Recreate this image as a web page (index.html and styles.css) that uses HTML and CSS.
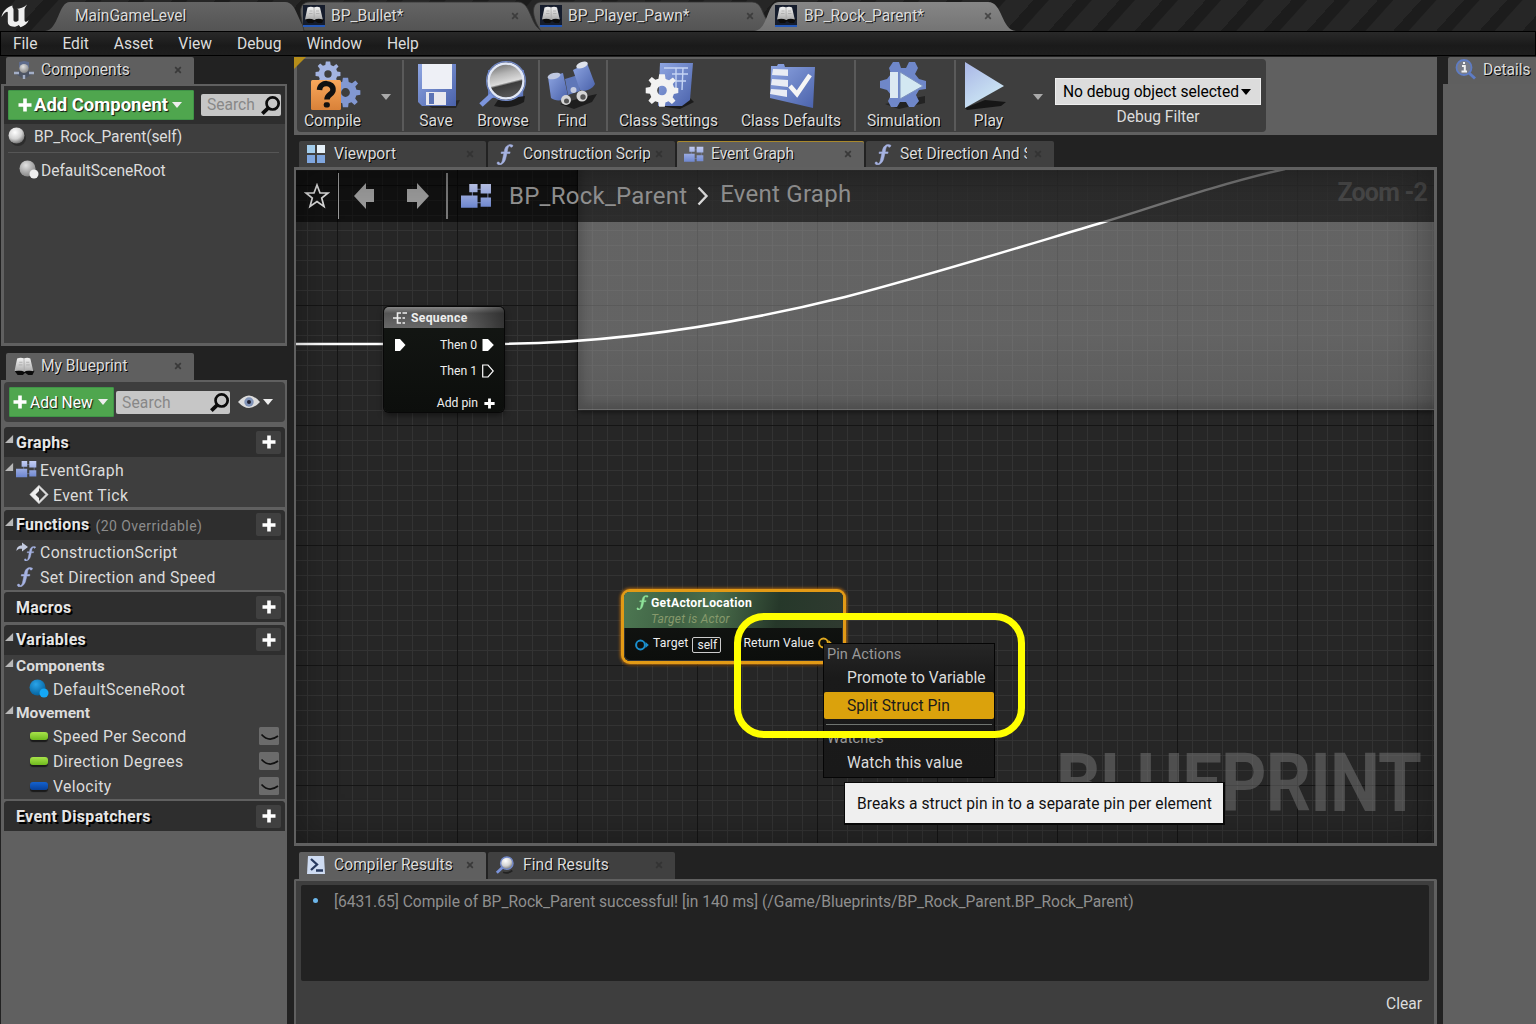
FILE: index.html
```html
<!DOCTYPE html>
<html lang="en">
<head>
<meta charset="utf-8">
<title>BP_Rock_Parent</title>
<link rel="stylesheet" href="styles.css">
</head>
<body>
<svg class="defs" width="0" height="0" aria-hidden="true">
  <defs>
    <linearGradient id="blue" x1="0" y1="0" x2="0" y2="1"><stop offset="0" stop-color="#c3cdf3"/><stop offset="1" stop-color="#6d86cf"/></linearGradient>
    <linearGradient id="deep" x1="0" y1="0" x2="1" y2="1"><stop offset="0" stop-color="#8fa6e2"/><stop offset="1" stop-color="#4a62ab"/></linearGradient>
    <linearGradient id="play" x1="0" y1="0" x2="0.6" y2="1"><stop offset="0" stop-color="#a9b6e6"/><stop offset="1" stop-color="#cfeaf5"/></linearGradient>
    <linearGradient id="orange" x1="0" y1="0" x2="0" y2="1"><stop offset="0" stop-color="#f9a85c"/><stop offset="1" stop-color="#d98138"/></linearGradient>
    <linearGradient id="paper" x1="0" y1="0" x2="0" y2="1"><stop offset="0" stop-color="#f4f4f4"/><stop offset="1" stop-color="#a9a9a9"/></linearGradient>
    <linearGradient id="tabg" x1="0" y1="0" x2="0" y2="1"><stop offset="0" stop-color="#646464"/><stop offset="1" stop-color="#545454"/></linearGradient>
    <linearGradient id="tabon" x1="0" y1="0" x2="0" y2="1"><stop offset="0" stop-color="#868686"/><stop offset="1" stop-color="#747474"/></linearGradient>
    <radialGradient id="ball" cx=".4" cy=".3" r=".7"><stop offset="0" stop-color="#fff"/><stop offset=".6" stop-color="#d2d2d2"/><stop offset="1" stop-color="#777"/></radialGradient>
    <radialGradient id="greyball" cx=".4" cy=".3" r=".7"><stop offset="0" stop-color="#e2e2e2"/><stop offset="1" stop-color="#888"/></radialGradient>
    <radialGradient id="blueball" cx=".4" cy=".3" r=".7"><stop offset="0" stop-color="#2aa4e8"/><stop offset="1" stop-color="#05639f"/></radialGradient>
    <linearGradient id="glass" x1="0.3" y1="0" x2="0.55" y2="1"><stop offset="0" stop-color="#707070"/><stop offset=".3" stop-color="#b4b4b4"/><stop offset=".56" stop-color="#dcdcdc"/><stop offset=".62" stop-color="#3c3c3c"/><stop offset="1" stop-color="#5a5a5a"/></linearGradient>
  </defs>
  <symbol id="gear" viewBox="-12 -12 24 24">
    <path fill-rule="evenodd" d="M-2 -11.500H2L2.500 -8.200L5 -7.200L7.700 -9.200L9.700 -7L7.600 -4.600L8.500 -2.200L11.500 -1.800V1.800L8.400 2.400L7.500 4.700L9.500 7.300L7 9.600L4.600 7.600L2.400 8.400L2 11.500H-2L-2.500 8.300L-4.800 7.500L-7.200 9.500L-9.600 7.200L-7.600 4.600L-8.500 2.300L-11.500 1.900V-1.900L-8.400 -2.400L-7.500 -4.700L-9.500 -7.300L-7.200 -9.600L-4.700 -7.600L-2.500 -8.300ZM0 -3.400A3.400 3.400 0 1 0 0 3.400A3.400 3.400 0 1 0 0 -3.400Z"/>
  </symbol>
  <symbol id="graph" viewBox="0 0 30 24">
    <path d="M11 7V17M11 5H26V18H14" fill="none" stroke="#7480a8" stroke-width="1"/>
    <path fill="url(#blue)" d="M8 0H16V8H8ZM19 0H29V9H19ZM0 11H16V23H0ZM19 13H29V22H19Z"/>
  </symbol>
  <symbol id="fn" viewBox="0 0 16 20">
    <path d="M15.500 1.200C12 -0.500 8.500 1.500 7.600 5.500L7.200 7.500H4.500L4.200 9H6.900L5.500 15.500C5 18 4 19 2.800 18.400C2.800 16.800 0.500 16.600 0.400 18.200C0.600 20.200 3.500 20.300 5.300 19C7.500 17.500 8.400 15.500 9 12.500L9.800 9H12.600L12.900 7.500H10.100L10.600 4.800C11 2.600 12 1.700 13 1.900C13 3.600 15.300 3.600 15.500 1.200Z" fill="currentColor" stroke="currentColor" stroke-width=".5"/>
  </symbol>
  <symbol id="book" viewBox="0 0 20 18">
    <path d="M1 13L4 17H9L11 15L14 17H18L20 13Z" fill="#0c0c0c"/>
    <path d="M3.500 1.500Q7 0 10 1.500Q13 0 16 1.500L18.800 13.500Q14 12 10.300 14Q6 12 1 13.500Z" fill="url(#paper)"/>
    <path d="M10 2L10.300 14M5.500 5H8.500M5 7.500H8.500M12 5H15M12 7.500H15.500" stroke="#aaa" stroke-width=".8" fill="none"/>
  </symbol>
  <symbol id="find" viewBox="0 0 18 18">
    <circle cx="10.800" cy="7.200" r="5.200" fill="none" stroke="#0b0b0b" stroke-width="2.300"/><path d="M7.200 11L2 16" stroke="#0b0b0b" stroke-width="3.200"/>
  </symbol>
  <symbol id="plus" viewBox="0 0 14 14"><path d="M5.200 0.500H8.800V5.200H13.500V8.800H8.800V13.500H5.200V8.800H0.500V5.200H5.200Z" fill="#fff"/></symbol>
  <symbol id="x" viewBox="0 0 8 8"><path d="M1.200 1.200L6.800 6.800M6.800 1.200L1.200 6.800" stroke="#303030" stroke-width="1.700"/></symbol>
  <symbol id="lens" viewBox="0 0 22 20"><path d="M9 12L2 18.500" stroke="#7b93da" stroke-width="3"/><path d="M9 18Q14 20 19 16" stroke="#222" stroke-width="2" fill="none"/><circle cx="13" cy="8" r="6.800" fill="url(#ball)" stroke="#7389c8" stroke-width="1.600"/></symbol>
  <symbol id="tri" viewBox="0 0 10 10"><path d="M0 9H9V0Z" fill="#b8b8b8"/></symbol>
  <symbol id="lid" viewBox="0 0 20 18"><rect width="20" height="18" rx="1.500" fill="#6b6b6b"/><path d="M2.500 7.500C7 12.500 13 13.500 19 9" fill="none" stroke="#111" stroke-width="1.700"/></symbol>
</svg>

<header class="titlebar">
  <svg class="logo" width="32" height="31" viewBox="0 0 32 31"><path d="M1.500 17C2.500 11.500 6.500 7.500 12.500 5.500C11.800 7.500 13.500 8 13.500 9.500V20C13.500 22 16.500 22.500 18.500 20.500V10.500C18.500 9.300 17.700 9 16.500 9C20 8.500 24 7.500 27 4.500C25.500 7 24.500 8 24.500 10V20C24.500 22.300 26.500 22.500 28.800 20C27.500 23.500 24.500 26 20.500 27.300L18.800 25C16.800 26.600 14.500 27 12.300 26.600C9.500 26.200 7.800 24.500 7.800 22V12.500C7.800 10.800 4.500 12 1.500 17Z" fill="#eee"/></svg>
  <div class="wtab wtab-level">
    <svg class="wshape" width="266" height="31"><path d="M0 31C14 30 13 2 25 2H240C254 2 252 29 266 31Z" fill="url(#tabg)"/></svg>
    <span>MainGameLevel</span>
  </div>
  <div class="wtab wtab-bullet">
    <svg class="wshape" width="250" height="31"><path d="M8 31V31C6 20 -1 2 14 2H222C236 2 234 29 248 31Z" fill="url(#tabg)" stroke="#333" stroke-width=".8"/></svg>
    <i class="asset"><svg width="20" height="18"><use href="#book"/></svg></i><span>BP_Bullet*</span><svg class="close" width="8" height="8"><use href="#x"/></svg>
  </div>
  <div class="wtab wtab-pawn">
    <svg class="wshape" width="240" height="31"><path d="M10 31C3 22 -3 2 11 2H221C231 2 231 14 236 20V31Z" fill="url(#tabg)" stroke="#333" stroke-width=".8"/></svg>
    <i class="asset"><svg width="20" height="18"><use href="#book"/></svg></i><span>BP_Player_Pawn*</span><svg class="close" width="8" height="8"><use href="#x"/></svg>
  </div>
  <div class="wtab wtab-rock">
    <svg class="wshape" width="275" height="31"><path d="M0 31C15 30 12 2 25 2H234C249 2 247 30 262 31Z" fill="url(#tabon)"/></svg>
    <i class="asset"><svg width="20" height="18"><use href="#book"/></svg></i><span>BP_Rock_Parent*</span><svg class="close" width="8" height="8"><use href="#x"/></svg>
  </div>
</header>

<nav class="menubar"><span>File</span><span>Edit</span><span>Asset</span><span>View</span><span>Debug</span><span>Window</span><span>Help</span></nav>

<main class="workspace">
  <aside class="left">
    <div class="ptab ptab-on side-tab">
      <svg width="22" height="20" viewBox="0 0 22 20"><path d="M1 13L11 9L21 13L11 19Z" fill="#4e5564"/><path d="M1 13H6M16 13H21M11 15V19" stroke="#a3aec6" stroke-width="2.400"/><path d="M6 2L11 1L16 2V8H6Z" fill="#5f6c8c"/><circle cx="11" cy="8.500" r="4.600" fill="url(#greyball)"/></svg>
      <span>Components</span><svg class="close" width="8" height="8"><use href="#x"/></svg>
    </div>
    <section class="components">
      <div class="comp-head">
        <button class="add add-component"><svg width="14" height="14"><use href="#plus"/></svg><span>Add Component</span><i class="caret"></i></button>
        <div class="search search-a"><span>Search</span><svg width="21" height="21"><use href="#find"/></svg></div>
      </div>
      <div class="comp-row comp-self"><svg width="18" height="19" viewBox="0 0 18 19"><circle cx="10" cy="11" r="8" fill="#222" opacity=".6"/><circle cx="8.500" cy="8.500" r="8" fill="url(#ball)"/></svg><span>BP_Rock_Parent(self)</span></div>
      <div class="comp-row comp-root"><svg width="20" height="20" viewBox="0 0 20 20"><circle cx="8.500" cy="8.500" r="8" fill="url(#greyball)"/><circle cx="15" cy="14" r="4.500" fill="#eee"/></svg><span>DefaultSceneRoot</span></div>
    </section>
    <div class="ptab ptab-on side-tab side-tab-bp">
      <svg width="20" height="19"><use href="#book"/></svg>
      <span>My Blueprint</span><svg class="close" width="8" height="8"><use href="#x"/></svg>
    </div>
    <section class="blueprint">
      <div class="bp-tools">
        <button class="add add-new"><svg width="14" height="14"><use href="#plus"/></svg><span>Add New</span><i class="caret"></i></button>
        <div class="search search-b"><span>Search</span><svg width="21" height="21"><use href="#find"/></svg></div>
        <svg class="eye" width="22" height="14" viewBox="0 0 22 14"><path d="M0 7Q11 -6 22 7Q11 19 0 7Z" fill="#ddd"/><circle cx="11" cy="7" r="4.700" fill="#8194b8"/><circle cx="11" cy="7" r="2" fill="#223"/></svg><i class="caret"></i>
      </div>
      <div class="group">
        <h3><svg class="tri" width="9" height="9"><use href="#tri"/></svg><span>Graphs</span><b class="plus"><svg width="14" height="14"><use href="#plus"/></svg></b></h3>
        <div class="row"><svg class="tri" width="9" height="9"><use href="#tri"/></svg><svg width="21" height="17" viewBox="0 0 30 24" class="ico1"><use href="#graph"/></svg><span>EventGraph</span></div>
        <div class="row in"><svg width="20" height="19" viewBox="0 0 20 19"><path d="M10 1.500L18 9.500L10 17.500L2 9.500Z" fill="none" stroke="#d8d8d8" stroke-width="2.200"/><path d="M10 1L1.500 9.500L10 18V13L6.500 9.500L10 6Z" fill="#eee"/></svg><span>Event Tick</span></div>
      </div>
      <div class="group">
        <h3><svg class="tri" width="9" height="9"><use href="#tri"/></svg><span>Functions</span><small>(20 Overridable)</small><b class="plus"><svg width="14" height="14"><use href="#plus"/></svg></b></h3>
        <div class="row"><svg class="ico1 fnc" width="21" height="20" viewBox="0 0 21 20"><path d="M0.500 9C0.500 5 3 3.500 6 3.500V0.500L12 5L6 9.500V6.800C4 6.500 2 6.500 0.500 9Z" fill="#c3cadf"/><use href="#fn" x="8" y="4" width="12" height="15"/></svg><span>ConstructionScript</span></div>
        <div class="row"><svg class="ico1 fnc fn-row" width="18" height="20"><use href="#fn"/></svg><span>Set Direction and Speed</span></div>
      </div>
      <div class="group"><h3><span>Macros</span><b class="plus"><svg width="14" height="14"><use href="#plus"/></svg></b></h3></div>
      <div class="group vars">
        <h3><svg class="tri" width="9" height="9"><use href="#tri"/></svg><span>Variables</span><b class="plus"><svg width="14" height="14"><use href="#plus"/></svg></b></h3>
        <h4><svg class="tri" width="9" height="9"><use href="#tri"/></svg>Components</h4>
        <div class="row in"><svg width="20" height="20" viewBox="0 0 20 20"><circle cx="8.500" cy="8.500" r="8" fill="url(#blueball)"/><circle cx="15" cy="14" r="4.500" fill="#14a7f5"/></svg><span>DefaultSceneRoot</span></div>
        <h4><svg class="tri" width="9" height="9"><use href="#tri"/></svg>Movement</h4>
        <div class="row in"><i class="pill"></i><span>Speed Per Second</span><svg class="lid" width="20" height="18"><use href="#lid"/></svg></div>
        <div class="row in"><i class="pill"></i><span>Direction Degrees</span><svg class="lid" width="20" height="18"><use href="#lid"/></svg></div>
        <div class="row in"><i class="pill pill-vec"></i><span>Velocity</span><svg class="lid" width="20" height="18"><use href="#lid"/></svg></div>
      </div>
      <div class="group"><h3><span>Event Dispatchers</span><b class="plus"><svg width="14" height="14"><use href="#plus"/></svg></b></h3></div>
    </section>
  </aside>

  <div class="center">
    <div class="toolbar">
      <i class="corner"></i>
      <div class="tools">
        <div class="tool t-compile">
          <svg width="54" height="50" viewBox="0 0 54 50"><use href="#gear" x="8" y="1" width="26" height="26" fill="#a3b4e2"/><use href="#gear" x="23" y="17" width="31" height="31" fill="#8298d2"/><rect x="4" y="20" width="30" height="30" rx="1.500" fill="url(#orange)"/><path d="M12.500 30C13 21 26.500 22 26 30C26 34.500 20 34 20 39.500" fill="none" stroke="#111" stroke-width="5.500"/><rect x="16.800" y="42.300" width="6" height="5.200" rx="2" fill="#111"/></svg>
          <span>Compile</span>
        </div>
        <i class="caret dim c-compile"></i>
        <div class="tool t-save">
          <svg width="46" height="50" viewBox="0 0 46 50"><path d="M10 44L44 40L40 48H16Z" fill="#171717" opacity=".6"/><path d="M2 4H40V46H6L2 42Z" fill="url(#deep)"/><rect x="6" y="4" width="30" height="25" fill="#eef0f6"/><rect x="10" y="32" width="20" height="13" fill="#e8e8ee"/><rect x="13" y="33" width="5" height="11" fill="#5b73b5"/></svg>
          <span>Save</span>
        </div>
        <div class="tool t-browse">
          <svg width="52" height="50" viewBox="0 0 52 50"><path d="M12 10H48L47 38H12Z" fill="#6078bd"/><path d="M18 46Q34 50 48 42L49 36L22 40Z" fill="#1b1b1b"/><path d="M18 33L5 45" stroke="#7c95dd" stroke-width="5"/><circle cx="30" cy="21" r="17.500" fill="url(#glass)" stroke="#e2e8f6" stroke-width="2.500"/><circle cx="30" cy="21" r="19.400" fill="none" stroke="#7188c6" stroke-width="1.200"/></svg>
          <span>Browse</span>
        </div>
        <div class="tool t-find">
          <svg width="52" height="50" viewBox="0 0 52 50"><path d="M14 44L42 36L51 34L46 42L28 49Z" fill="#1d1d1d"/><path d="M19 19L32 15L34 31L22 35Z" fill="#5f77b8"/><path d="M2 17L17 13L22 36C17 42 9 41 5 38Z" fill="url(#deep)"/><path d="M27 10L41 3L49 24C46 30 38 32 34 30Z" fill="url(#deep)"/><ellipse cx="8" cy="16" rx="6.500" ry="3" transform="rotate(-14 8 16)" fill="#bfc8e0"/><ellipse cx="36" cy="5" rx="6" ry="3" transform="rotate(-22 36 5)" fill="#dfe3ec"/><circle cx="20" cy="40" r="5" fill="#d5d5d5"/><circle cx="20.500" cy="41" r="2.500" fill="#555"/><circle cx="36" cy="36" r="5.500" fill="#d5d5d5"/><circle cx="37" cy="37" r="2.700" fill="#555"/><circle cx="27.500" cy="30" r="3" fill="#c4cbe0"/></svg>
          <span>Find</span>
        </div>
        <div class="tool t-settings">
          <svg width="50" height="50" viewBox="0 0 50 50"><path d="M14 46L46 38L50 42L36 49Z" fill="#1b1b1b"/><path d="M16 3H49L46 40L38 46H14Z" fill="url(#deep)"/><path d="M20 8H44M28 14H44M28 21H42M32 8V30M39 8L38 30" stroke="#c5d4f4" stroke-width="1.400"/><use href="#gear" x="1" y="13" width="34" height="35" fill="#f2f2f2"/></svg>
          <span>Class Settings</span>
        </div>
        <div class="tool t-defaults">
          <svg width="50" height="50" viewBox="0 0 50 50"><path d="M12 4H18L19 7H49L47 48L4 38L5 6H11Z" fill="url(#deep)"/><path d="M7 9L22 9.500V16L6 15ZM6 19L22 20V27L5 25ZM5 29L21 30V37L4 34Z" fill="#e9ecf4"/><path d="M24 26L31 34L44 15" fill="none" stroke="#f5f5f5" stroke-width="4.500"/></svg>
          <span>Class Defaults</span>
        </div>
        <div class="tool t-sim">
          <svg width="50" height="50" viewBox="0 0 50 50"><path d="M6 44L46 36V43L20 49Z" fill="#1d1d1d" opacity=".8"/><path d="M14 2H20L22 8H27L30 2H36L39 8L36 14L40 19L47 21V29L40 30L37 35L40 41L35 47H30L27 42H21L18 47H12L9 41L12 35L8 30L1 28V21L8 19L12 14L10 8Z" fill="#6f87c9"/><path d="M11 12H19V38H11Z" fill="#dce9f2"/><path d="M21 12L44 26L21 39Z" fill="#d3e8f2" stroke="#7d92bd"/></svg>
          <span>Simulation</span>
        </div>
        <div class="tool t-play">
          <svg width="44" height="50" viewBox="0 0 44 50"><path d="M2 48L22 40L43 42L38 46L4 50Z" fill="#161616"/><path d="M2 2L41 26L2 48Z" fill="url(#play)"/></svg>
          <span>Play</span>
        </div>
        <i class="caret dim c-play"></i>
        <div class="debug"><div class="select"><span>No debug object selected</span><i class="caret dark"></i></div><span>Debug Filter</span></div>
      </div>
    </div>

    <div class="tabs">
      <div class="ptab"><svg width="20" height="20" viewBox="0 0 20 20"><path d="M1 1H9V9H1ZM11 11H19V19H11ZM1 11H9V19H1Z" fill="#7fa6df"/><path d="M1 1H9V9H1Z" fill="#a3cdec"/><path d="M11 1H19V9H11Z" fill="#e5f0f8"/></svg><span>Viewport</span><svg class="close" width="8" height="8"><use href="#x"/></svg></div>
      <div class="ptab"><svg class="fnc" width="20" height="21"><use href="#fn"/></svg><span class="clip">Construction Script</span><svg class="close" width="8" height="8"><use href="#x"/></svg></div>
      <div class="ptab ptab-on gold"><svg width="20" height="17" viewBox="0 0 30 24"><use href="#graph"/></svg><span>Event Graph</span><svg class="close" width="8" height="8"><use href="#x"/></svg></div>
      <div class="ptab"><svg class="fnc" width="20" height="21"><use href="#fn"/></svg><span class="clip">Set Direction And Speed</span><svg class="close" width="8" height="8"><use href="#x"/></svg></div>
    </div>

    <div class="graph">
      <div class="comment"></div>
      <svg class="wires" width="1138" height="673" viewBox="296 170 1138 673"><path d="M296 344H396M490 344C620 344 740 323 845 297C930 275 1020 247 1104 222C1165 203 1220 184 1285 169" fill="none" stroke="#fff" stroke-width="2.500"/></svg>
      <div class="mark">BLUEPRINT</div>

      <div class="node sequence">
        <header><svg width="14" height="12" viewBox="0 0 14 12"><path d="M0 6H5M8 1H4.500V11H8M4.500 6H8M9.500 1H14M9.500 6H12M9.500 11H12" stroke="#eee" stroke-width="1.600" fill="none"/></svg>Sequence</header>
        <div class="pins"><svg width="12" height="14" viewBox="0 0 12 14"><path d="M1 1H6L11.500 7L6 13H1Z" fill="#fff"/></svg><span>Then 0</span><svg width="12" height="14" viewBox="0 0 12 14"><path d="M0.500 1H6L11.800 7L6 13H0.500Z" fill="#fff"/></svg></div>
        <div class="pins"><span>Then 1</span><svg width="12" height="14" viewBox="0 0 12 14"><path d="M0.700 1H6L11.300 7L6 13H0.700Z" fill="none" stroke="#fff" stroke-width="1.200"/></svg></div>
        <div class="pins addpin"><span>Add pin</span><svg width="11" height="11" viewBox="0 0 14 14"><use href="#plus" width="14" height="14"/></svg></div>
      </div>

      <div class="node actor">
        <header><svg width="13" height="15"><use href="#fn"/></svg><div>GetActorLocation<em>Target is Actor</em></div></header>
        <div class="io">
          <svg width="14" height="12" viewBox="0 0 14 12"><circle cx="5.500" cy="6" r="4.400" fill="none" stroke="#1b8fce" stroke-width="2"/><path d="M10.500 3L13.800 6L10.500 9Z" fill="#1b8fce"/></svg>
          <span>Target</span><b>self</b><span class="ret">Return Value</span>
          <svg class="retpin" width="14" height="12" viewBox="0 0 14 12"><circle cx="5.500" cy="6" r="4.400" fill="none" stroke="#e0a920" stroke-width="2"/><path d="M10.500 3L13.800 6L10.500 9Z" fill="#e0a920"/></svg>
        </div>
      </div>

      <div class="crumbs">
        <svg width="26" height="26" viewBox="0 0 26 26"><path d="M13 2L16 10H24L17.700 15L20 23.500L13 18.500L6 23.500L8.300 15L2 10H10Z" fill="none" stroke="#ddd" stroke-width="1.700"/></svg>
        <i class="bar b1"></i>
        <svg class="back" width="22" height="28" viewBox="0 0 22 28"><path d="M0 14L12 1V7H20V20H12V27Z" fill="#999"/></svg>
        <svg class="fwd" width="22" height="28" viewBox="0 0 22 28"><path d="M22 14L10 1V7H0V20H10V27Z" fill="#999"/></svg>
        <i class="bar b2"></i>
        <svg class="gico" width="31" height="25" viewBox="0 0 30 24"><use href="#graph"/></svg>
        <span class="c1">BP_Rock_Parent</span>
        <svg class="chev" width="12" height="20" viewBox="0 0 12 20"><path d="M1.500 1.500L9.500 10L1.500 18.500" fill="none" stroke="#ddd" stroke-width="2.400"/></svg>
        <span class="c2">Event Graph</span>
        <span class="zoom">Zoom -2</span>
      </div>

      <div class="context">
        <h5>Pin Actions</h5>
        <div class="item">Promote to Variable</div>
        <div class="item on">Split Struct Pin</div>
        <hr>
        <h5 class="watch">Watches</h5>
        <div class="item last">Watch this value</div>
      </div>
      <div class="highlight"></div>
      <div class="tooltip">Breaks a struct pin in to a separate pin per element</div>
    </div>

    <div class="tabs results-tabs">
      <div class="ptab ptab-on"><svg width="20" height="20" viewBox="0 0 20 20"><path d="M2 1H18L19 19H1Z" fill="#cfdcf2"/><path d="M5 4L11 9.500L5 15M10 15.500H17" stroke="#27395e" stroke-width="2.300" fill="none"/></svg><span>Compiler Results</span><svg class="close" width="8" height="8"><use href="#x"/></svg></div>
      <div class="ptab"><svg width="20" height="20"><use href="#lens"/></svg><span>Find Results</span><svg class="close" width="8" height="8"><use href="#x"/></svg></div>
    </div>
    <div class="results">
      <div class="log"><i></i><span>[6431.65] Compile of BP_Rock_Parent successful! [in 140 ms] (/Game/Blueprints/BP_Rock_Parent.BP_Rock_Parent)</span></div>
      <div class="clear">Clear</div>
    </div>
  </div>

  <aside class="right">
    <div class="ptab ptab-on det"><svg width="22" height="21" viewBox="0 0 22 21"><path d="M14 14L20 19.500" stroke="#5e7cc4" stroke-width="3"/><circle cx="9" cy="8.500" r="7.500" fill="#777b88" stroke="#5e7cc4" stroke-width="1.800"/><path d="M7 7H9.800V12M6.500 12.500H12M9 3V5" stroke="#f0f0f0" stroke-width="2" fill="none"/></svg><span>Details</span></div>
    <div class="details"></div>
  </aside>
</main>
</body>
</html>
```
FILE: styles.css
```css
* { box-sizing: border-box; }
body { margin: 0; width: 1536px; height: 1024px; overflow: hidden; background: #222; color: #dcdcdc; font-family: Roboto, "Liberation Sans", sans-serif; font-size: 15.600px; letter-spacing: -.02px; line-height: 20px; display: flex; flex-direction: column; }
svg { display: block; flex: none; }
span { white-space: nowrap; }
i { font-style: normal; flex: none; }
h3, h4, h5 { margin: 0; font-size: 15px; }
.defs { position: absolute; }

/* window tabs */
.titlebar { flex: none; height: 31px; display: flex; background: repeating-linear-gradient(132deg, #1c1c1c 0 11px, #262626 12px 32px); }
.logo { width: 32px; margin-right: 13px; }
.wtab { position: relative; height: 31px; display: flex; align-items: center; text-shadow: 1px 1px 0 #111; }
.wshape { position: absolute; left: 0; top: 0; }
.wtab span, .asset, .wtab .close { position: relative; }
.wtab .close { margin-left: auto; opacity: .7; }
.wtab-level { width: 251px; padding-left: 30px; }
.wtab-bullet { width: 235px; padding: 0 12px 0 7px; }
.wtab-pawn { width: 224px; padding: 0 1px 0 9px; }
.wtab-rock { width: 272px; margin-left: -1px; padding: 0 34px 0 21px; }
.wtab-rock span { left: 1px; }
.asset { width: 22px; height: 22px; padding: 1px 1px; margin-right: 6px; background: #151c2c; border-bottom: 2px solid #2458b8; }

.menubar { flex: none; height: 25px; border: 1px solid #000; background: linear-gradient(#292929, #1a1a1a 60%, #1e1e1e); padding: 1px 0 0 12px; display: flex; gap: 25px; align-items: center; }

.workspace { flex: 1; min-height: 0; display: grid; grid-template-columns: 286px 1143px 93px; column-gap: 7px; padding-left: 1px; padding-top: 1px; }
.right { margin-left: -1px; }

.ptab { display: flex; align-items: center; height: 26px; width: 187px; padding: 0 12px 0 7px; background: #404040; border-radius: 2px 2px 0 0; text-shadow: 1px 1px 0 #000; }
.ptab > span { margin-left: 8px; }
.ptab .close { margin-left: auto; opacity: .8; }
.ptab-on { background: #5f5f5f; }
.side-tab { width: 188px; height: 27px; margin-left: 5px; padding-bottom: 1px; }
.side-tab > span { margin-left: 6px; }
.side-tab > svg:first-child { width: 22px; }

/* components */
.left { display: flex; flex-direction: column; }
.components { height: 262px; margin-bottom: 7px; border: 3px solid #606060; border-width: 2px 2px 3px 3px; background: #3e3e3e; }
.comp-head { height: 38px; background: #2e2e2e; display: flex; align-items: center; gap: 7px; padding: 0 3px 0 4px; }
.add { border: 1px solid #3f9447; background: #4fa64e; color: #fff; display: flex; align-items: center; font: inherit; letter-spacing: inherit; height: 30px; padding: 0; text-shadow: 1px 1px 1px #111; border-radius: 1px; }
.add-component { width: 186px; padding-left: 9px; gap: 2px; font-weight: 700; font-size: 18.500px; }
.add-new { width: 105px; padding-left: 3px; gap: 3px; }
.caret { border: 5px solid transparent; border-top: 6px solid #eee; border-bottom: 0; margin-left: 2px; }
.caret.dim { border-top-color: #aaa; }
.caret.dark { border-top-color: #000; }
.search { background: #c6c6c6; color: #888; display: flex; align-items: center; justify-content: space-between; padding: 0 0 0 6px; height: 22px; border-radius: 2px; }
.search-a { width: 80px; }
.search-b { width: 114px; height: 23px; }
.comp-row { display: flex; align-items: center; }
.comp-self { height: 29px; margin: 0 6px 0 4px; padding-bottom: 3px; border-bottom: 1px solid #565656; }
.comp-self span { margin-left: 8px; letter-spacing: -.1px; }
.comp-root { height: 34px; padding-left: 15px; }
.comp-root span { margin-left: 2px; padding-top: 2px; }

/* my blueprint */
.blueprint { flex: 1; background: #606060; padding: 2px 2px 0 3px; }
.bp-tools { height: 40px; background: #3e3e3e; border-radius: 4px; display: flex; align-items: center; padding-left: 5px; margin-bottom: 5px; }
.bp-tools span { padding-top: 2px; }
.search-b { margin-left: 2px; }
.search-b span { letter-spacing: .15px; }
.eye { margin-left: 8px; }
.bp-tools > .caret { margin-left: 3px; }
.group { background: #3e3e3e; margin-bottom: 2.500px; border-radius: 4px 4px 0 0; overflow: hidden; }
.group h3 { height: 30px; background: #2e2e2e; padding-left: 12px; display: flex; align-items: center; position: relative; text-shadow: 2px 2px 0 #000; color: #e6e6e6; font-size: 15.900px; letter-spacing: .35px; }
.group h3 span { padding-top: 1px; }
.tri { position: absolute; left: 1px; top: 50%; margin-top: -7px; }
.group small { font-size: 14px; font-weight: 400; color: #8c8c8c; margin: 3px 0 0 6px; letter-spacing: .45px; text-shadow: none; }
.plus { margin-left: auto; margin-right: 4px; width: 25px; height: 23px; background: #404040; border-radius: 2px; display: flex; align-items: center; justify-content: center; }
.row { height: 25px; display: flex; align-items: center; position: relative; padding-left: 12px; letter-spacing: .35px; font-size: 15.800px; }
.row > span { padding-top: 2px; }
.row > .ico1 + span { margin-left: 3px; }
.ico1 { width: 21px; }
.fn-row { width: 18px; margin-right: 3px; }
.fnc { color: #a6b3e2; }
.row.in { padding-left: 25px; }
.row.in > span { margin-left: 4px; }
.group h4 { height: 22px; padding-left: 12px; display: flex; align-items: center; position: relative; font-size: 15.500px; letter-spacing: 0; padding-top: 1px; }
.pill { width: 18px; height: 8px; margin-left: 1px; margin-right: 1px; border-radius: 3px; background: linear-gradient(#a8e34a, #6fba1e); box-shadow: 0 2px 1px #1a1a1a; }
.pill-vec { background: linear-gradient(#1462cf, #07409a); }
.lid { margin-left: auto; margin-right: 6px; }

/* toolbar */
.center { display: flex; flex-direction: column; min-width: 0; }
.toolbar { position: relative; height: 78px; background: #606060; padding: 2px 3px; }
.corner { position: absolute; left: 0; top: 0; border: 6px solid #b58d1a; border-right-color: transparent; border-bottom-color: transparent; }
.tools { width: 969px; height: 73px; background: #3e3e3e; border-radius: 4px; display: flex; align-items: center; }
.tool { height: 71px; display: flex; flex-direction: column; align-items: center; justify-content: space-between; text-shadow: 1px 1px 0 #000; border-right: 2px solid #5a5a5a; }
.t-compile { width: 71px; border: 0; }
.t-compile svg { margin-left: 2px; }
.c-compile { margin: 2px 11px 0 13px; }
.t-save { width: 66px; border: 0; border-left: 2px solid #5a5a5a; }
.t-save svg { margin-left: 6px; }
.t-browse { width: 72px; }
.t-browse svg { margin-right: 2px; }
.t-find { width: 68px; padding-right: 2px; }
.t-settings { width: 124px; border: 0; padding-right: 3px; }
.t-defaults { width: 124px; padding-right: 4px; }
.t-sim { width: 100px; padding-right: 2px; }
.t-play { width: 65px; border: 0; }
.t-play svg { margin-left: -8px; }
.c-play { margin: 2px 0 0 12px; }
.debug { margin-left: 12px; width: 206px; height: 73px; display: flex; flex-direction: column; align-items: center; gap: 2px; padding-top: 19px; }
.select { width: 206px; height: 27px; background: #dcdcdc; border: 1px solid #eee; color: #000; display: flex; align-items: center; padding-left: 7px; }
.select .caret { margin-left: 2px; }

.tabs { display: flex; gap: 2px; padding-left: 5px; margin-top: 6px; height: 26px; }
.clip { width: 127px; overflow: hidden; }
.gold { box-shadow: inset 0 1px 0 #a8882c; }
.tabs .ptab:nth-child(3) > span { margin-left: 7px; }
.tabs .ptab:nth-child(4) { width: 188px; }
.tabs .ptab:nth-child(4) > span { margin-left: 7px; }

/* graph canvas */
.graph { position: relative; height: 679px; border: 2px solid #606060; border-width: 3px 3px 3px 2px; overflow: hidden; background-color: #262626;
  background-image: linear-gradient(90deg, #151515 1px, transparent 1px), linear-gradient(#151515 1px, transparent 1px), linear-gradient(90deg, #333 1px, transparent 1px), linear-gradient(#333 1px, transparent 1px);
  background-size: 120px 120px, 120px 120px, 15px 15px, 15px 15px; background-position: 41px 15px, 41px 15px, 11px 0, 11px 0; }
.graph::after { content: ""; position: absolute; inset: 0; box-shadow: inset 0 0 40px rgba(0,0,0,.35); pointer-events: none; }
.comment { position: absolute; left: 282px; top: -10px; right: 0; height: 250px; background: linear-gradient(rgba(160,160,160,.5) 70%, rgba(150,150,150,.47)); border-bottom: 1px solid rgba(140,140,140,.2); box-shadow: 0 2px 5px rgba(0,0,0,.5), inset 5px -5px 8px rgba(0,0,0,.15); }
.wires { position: absolute; left: 0; top: 0; }
.mark { position: absolute; left: 760px; top: 566px; font-size: 81px; line-height: 96px; font-weight: 700; letter-spacing: -1px; color: rgba(120,120,120,.5); transform: scaleX(.873); transform-origin: left; }
.node { position: absolute; border-radius: 6px; font-size: 12.200px; line-height: 14px; color: #eee; letter-spacing: .15px; background: linear-gradient(#141714, #0c0e0c); box-shadow: 0 0 0 1px #080808, 0 3px 6px rgba(0,0,0,.5); }
.node header { font-weight: 700; display: flex; letter-spacing: .3px; }
.sequence { left: 88px; top: 137px; width: 120px; height: 105px; border-radius: 5px; letter-spacing: 0; }
.sequence header { height: 21px; border-radius: 5px 5px 0 0; background: linear-gradient(115deg, rgba(0,0,0,0) 65%, rgba(0,0,0,.5)), linear-gradient(#858585, #555 30%, #686868); align-items: center; gap: 4px; padding-left: 9px; }
.pins { display: flex; align-items: center; height: 26px; padding: 0 10px; margin-top: 4px; }
.pins span { margin-left: auto; margin-right: 5px; }
.pins + .pins { margin-top: 0; }
.pins.addpin { margin-top: 6px; padding-right: 9px; }
.addpin span { margin-right: 6px; }
.actor { left: 328px; top: 422px; width: 219px; height: 69px; box-shadow: inset 0 0 0 1px #333, 0 0 0 3px #e29a16, 0 0 3px 4px rgba(226,130,10,.7); }
.actor header { height: 36px; border-radius: 5px 5px 0 0; background: linear-gradient(100deg, #4d7852, #3f6144 25%, #4b6f4c 40%, #26382a 70%, #2f3a30); padding: 4px 0 0 12px; gap: 2px; color: #fff; }
.actor header svg { color: #8fe39a; margin-top: -1px; }
.actor em { display: block; font-weight: 400; color: #879a6c; margin-top: 2px; font-size: 12px; letter-spacing: .2px; }
.io { display: flex; padding: 4px 0 0 10px; align-items: center; height: 29px; }
.io > svg { margin-left: 1px; }
.io span { margin-left: 4px; position: relative; top: -2px; }
.io b { font-weight: 400; border: 1px solid #ccc; border-radius: 2px; padding: 0 4px; margin-left: 4px; width: 29px; height: 16px; font-size: 12px; letter-spacing: 0; }
.io .ret { margin: 0 0 0 22px; }
.io .retpin { margin-left: 4px; margin-top: -3px; }

.crumbs { position: absolute; left: 0; right: 0; top: 0; height: 52px; background: rgba(0,0,0,.55); display: flex; align-items: center; padding-left: 8px; font-size: 24px; line-height: 30px; letter-spacing: .25px; color: #939393; }
.bar { width: 1px; height: 46px; background: #999; }
.b1 { margin-left: 8px; }
.back { margin-left: 15px; }
.fwd { margin-left: 31px; }
.b2 { margin-left: 17px; width: 2px; background: #777; }
.gico { margin-left: 13px; }
.c1 { margin-left: 17px; margin-top: -1px; }
.chev { margin-left: 10px; }
.c2 { margin-left: 11px; margin-top: -5px; }
.zoom { margin-left: auto; margin-right: 7px; margin-top: -7px; font-weight: 700; font-size: 25px; color: #474747; letter-spacing: -.8px; }

.context { position: absolute; left: 527px; top: 473px; width: 172px; height: 135px; border: 1px solid #050505; background: linear-gradient(#262626, #1a1a1a 25%, #191919); z-index: 2; letter-spacing: .04px; }
.context h5 { font-weight: 400; font-size: 14.500px; color: #999; padding: 1px 0 0 3px; height: 20px; letter-spacing: .1px; }
.item { padding: 4px 0 4px 23px; height: 28px; }
.item.on { background: #dba20c; color: #1a1a1a; border-radius: 2px; height: 27px; }
.context hr { border: 0; height: 1px; background: #6f7470; margin: 5px 2px 3px; }
.item.last { padding-top: 5px; letter-spacing: .12px; }
.highlight { position: absolute; left: 438px; top: 443px; width: 291px; height: 125px; border: 7px solid #ff0; border-radius: 30px; z-index: 3; }
.tooltip { position: absolute; left: 548px; top: 612px; width: 381px; height: 43px; border: 2px solid #080808; border-width: 1px 2px 2px 1px; background: #efefef; color: #111; padding: 11px 12px 9px; white-space: nowrap; z-index: 3; letter-spacing: .08px; }

/* compiler results */
.results-tabs { margin-top: 6px; height: 27px; }
.results-tabs .ptab { height: 27px; padding-bottom: 2px; }
.results-tabs span { letter-spacing: .05px; }
.results { flex: 1; border: 3px solid #606060; border-width: 2px 3px 0 2px; background: #3e3e3e; border-radius: 2px 2px 0 0; padding: 4px 5px; }
.log { height: 96px; background: #222; border-radius: 2px; display: flex; padding: 7px 0 0 12px; color: #8f8f8f; letter-spacing: -.015px; }
.log i { width: 5px; height: 5px; margin-top: 6px; border-radius: 50%; background: #6cb6ea; }
.log span { margin-left: 16px; }
.clear { text-align: right; padding: 13px 7px 0 0; }
.right { display: flex; flex-direction: column; }
.det { margin-left: 5px; height: 27px; width: 89px; padding-bottom: 2px; }
.det span { margin-left: 6px; }
.details { flex: 1; background: #606060; }
```
